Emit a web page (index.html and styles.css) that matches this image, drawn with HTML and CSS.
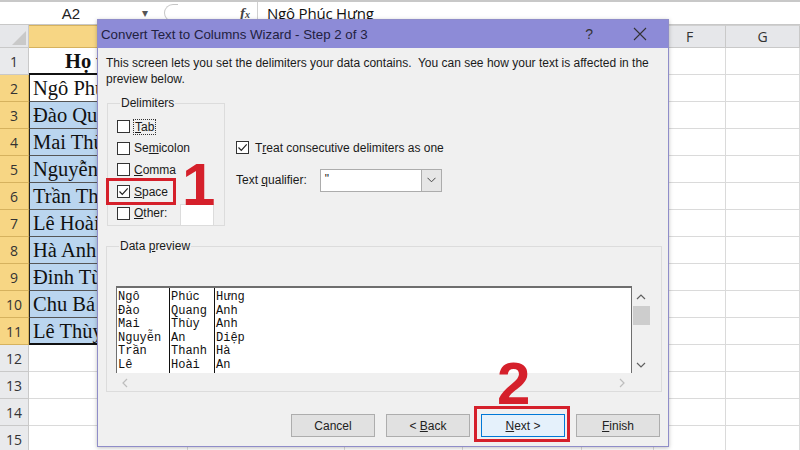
FILE: index.html
```html
<!DOCTYPE html>
<html lang="vi">
<head>
  <meta charset="UTF-8" />
  <title>Convert Text to Columns Wizard</title>
  <link rel="stylesheet" href="styles.css">
</head>
<body>
  <!-- Formula bar -->
  <div class="formula-bar">
    <div class="name-box"><span class="ref">A2</span><span class="nb-arrow">&#9662;</span></div>
    <div class="fb-handle"></div>
    <div class="fx">f<small>x</small></div>
    <div class="fb-value">Ngô Phúc Hưng</div>
  </div>

  <!-- Sheet grid -->
  <div class="sheet">
    <div class="hd corner"><svg width="14" height="14" viewBox="0 0 14 14"><polygon points="14,0 14,14 0,14" fill="#c9c9c9"/></svg></div>
    <div class="hd col sel">A</div>
    <div class="hd col">B</div>
    <div class="hd col">C</div>
    <div class="hd col">D</div>
    <div class="hd col">E</div>
    <div class="hd col">F</div>
    <div class="hd col">G</div>
  </div>

  <!-- Wizard dialog -->
  <div class="dialog">
    <div class="titlebar">
      <span class="title">Convert Text to Columns Wizard - Step 2 of 3</span>
      <span class="tb-help">?</span>
      <svg class="tb-close" width="14" height="14" viewBox="0 0 14 14"><path d="M1 1 L13 13 M13 1 L1 13" stroke="#333" stroke-width="1.1"/></svg>
    </div>
    <div class="body">
      <p class="intro">This screen lets you set the delimiters your data contains.&nbsp; You can see how your text is affected in the preview below.</p>

      <div class="options">
        <fieldset class="group delims">
          <legend>Delimiters</legend>
          <label class="cb"><span class="box"></span><span class="focus"><u>T</u>ab</span></label>
          <label class="cb"><span class="box"></span>Se<u>m</u>icolon</label>
          <label class="cb"><span class="box"></span><u>C</u>omma</label>
          <label class="cb"><span class="box checked"><svg width="11" height="11" viewBox="0 0 11 11"><path d="M1.5 5.5 L4.3 8.3 L9.7 2.4" fill="none" stroke="#222" stroke-width="1.2"/></svg></span><u>S</u>pace</label>
          <label class="cb"><span class="box"></span><u>O</u>ther:<span class="other-input"></span></label>
        </fieldset>

        <div class="right-opts">
          <label class="cb"><span class="box checked"><svg width="11" height="11" viewBox="0 0 11 11"><path d="M1.5 5.5 L4.3 8.3 L9.7 2.4" fill="none" stroke="#222" stroke-width="1.2"/></svg></span>T<u>r</u>eat consecutive delimiters as one</label>
          <div class="qualifier">
            <span>Text <u>q</u>ualifier:</span>
            <div class="select"><span class="sel-val">"</span><span class="sel-btn"><svg width="9" height="6" viewBox="0 0 9 6"><path d="M0.5 0.8 L4.5 4.8 L8.5 0.8" fill="none" stroke="#444" stroke-width="1"/></svg></span></div>
          </div>
        </div>
      </div>

      <fieldset class="group preview">
        <legend>Data <u>p</u>review</legend>
        <div class="pv-wrap">
          <div class="pv-box">
            <div class="pv-col c1">Ngô<br>Đào<br>Mai<br>Nguyễn<br>Trần<br>Lê</div>
            <div class="pv-col c2">Phúc<br>Quang<br>Thùy<br>An<br>Thanh<br>Hoài</div>
            <div class="pv-col c3">Hưng<br>Anh<br>Anh<br>Diệp<br>Hà<br>An</div>
          </div>
          <div class="vscroll">
            <svg width="10" height="6" viewBox="0 0 10 6"><path d="M1 5 L5 1 L9 5" fill="none" stroke="#606060" stroke-width="1.2"/></svg>
            <span class="thumb"></span>
            <svg class="down" width="10" height="6" viewBox="0 0 10 6"><path d="M1 1 L5 5 L9 1" fill="none" stroke="#606060" stroke-width="1.2"/></svg>
          </div>
          <div class="hscroll">
            <svg width="6" height="10" viewBox="0 0 6 10"><path d="M5 1 L1 5 L5 9" fill="none" stroke="#bdbdbd" stroke-width="1.2"/></svg>
            <svg width="6" height="10" viewBox="0 0 6 10"><path d="M1 1 L5 5 L1 9" fill="none" stroke="#bdbdbd" stroke-width="1.2"/></svg>
          </div>
        </div>
      </fieldset>

      <div class="buttons">
        <button class="btn">Cancel</button>
        <button class="btn">&lt; <u>B</u>ack</button>
        <button class="btn primary"><u>N</u>ext &gt;</button>
        <button class="btn"><u>F</u>inish</button>
      </div>
    </div>
  </div>

  <!-- Step markers -->
  <div class="mark-box mark-space"></div>
  <div class="mark-num num1">1</div>
  <div class="mark-box mark-next"></div>
  <div class="mark-num num2">2</div>

  <script>
    // build sheet rows
    var names = ['Ngô Phúc Hưng', 'Đào Quang Anh', 'Mai Thùy Anh', 'Nguyễn An Diệp', 'Trần Thanh Hà',
      'Lê Hoài An', 'Hà Anh Tuấn', 'Đinh Từ Minh', 'Chu Bá Long', 'Lê Thùy Linh'];
    var sheet = document.querySelector('.sheet');
    for (var r = 1; r <= 15; r++) {
      var hd = document.createElement('div');
      hd.className = 'hd row' + (r >= 2 && r <= 11 ? ' sel' : '');
      hd.textContent = r;
      sheet.appendChild(hd);
      var a = document.createElement('div');
      if (r === 1) {
        a.className = 'cell a head';
        a.textContent = 'Họ và tên';
      } else if (r <= 11) {
        a.className = 'cell a data' + (r === 2 ? ' active' : '') + (r === 11 ? ' last' : '');
        a.textContent = names[r - 2];
      } else {
        a.className = 'cell';
      }
      sheet.appendChild(a);
      for (var c = 0; c < 6; c++) {
        var cell = document.createElement('div');
        cell.className = 'cell';
        sheet.appendChild(cell);
      }
    }
  </script>
</body>
</html>
```

FILE: styles.css
```css
* {
  box-sizing: border-box;
}
body {
  margin: 0;
  width: 800px;
  height: 450px;
  overflow: hidden;
  background: #fff;
  font-family: "Liberation Sans", Arial, sans-serif;
  position: relative;
}

/* Formula bar */
.formula-bar {
  display: flex;
  align-items: center;
  height: 25px;
  border-top: 2px solid #c8c8c8;
  border-bottom: 1px solid #c8c8c8;
  background: #fff;
}
.name-box {
  width: 164px;
  display: flex;
  align-items: center;
  font-size: 15px;
  color: #222;
}
.name-box .ref {
  width: 142px;
  text-align: center;
}
.nb-arrow {
  font-size: 12px;
  color: #555;
}
.fb-handle {
  width: 14px;
  height: 18px;
  border: 1px solid #c6c6c6;
  border-right: none;
  border-radius: 9px 0 0 9px;
}
.fx {
  margin-left: 62px;
  width: 13px;
  font-family: "Liberation Serif", serif;
  font-style: italic;
  font-weight: bold;
  font-size: 15px;
  color: #444;
}
.fx small {
  font-size: 10px;
}
.fb-value {
  margin-left: 4px;
  border-left: 1px solid #d0d0d0;
  height: 22px;
  line-height: 22px;
  padding-left: 9px;
  font-size: 15px;
  color: #111;
  font-family: "Open Sans", sans-serif;
  letter-spacing: -0.2px;
}

/* Sheet */
.sheet {
  display: grid;
  grid-template-columns: 29px 159px 157px 118px 119px 72px 72px 74px;
  grid-template-rows: 23px repeat(15, 27px);
}
.hd {
  background: #e6e7ea;
  border-right: 1px solid #c9c9c9;
  border-bottom: 1px solid #c9c9c9;
  display: flex;
  align-items: center;
  justify-content: center;
  font-family: "Open Sans", sans-serif;
  font-size: 14px;
  color: #333;
}
.hd.corner {
  align-items: flex-end;
  justify-content: flex-end;
  padding: 0 2px 2px 0;
}
.hd.col {
  border-top: 1px solid #d0d0d0;
}
.hd.sel {
  background: #f7d684;
  border-color: #d6b25e;
}
.hd.row {
  background: #e9eaec;
}
.hd.row.sel {
  background: #f7d684;
}
.cell {
  border-right: 1px solid #dadada;
  border-bottom: 1px solid #dadada;
  overflow: hidden;
  white-space: nowrap;
}
.cell.a {
  font-family: "Liberation Serif", serif;
  font-size: 20.5px;
  line-height: 26px;
  color: #111;
  padding-left: 3px;
}
.cell.head {
  background: #fff;
  font-weight: bold;
  padding-left: 36px;
  border-bottom: 2px solid #111;
}
.cell.data {
  background: #bad5ef;
  border-left: 1px solid #222;
  border-bottom-color: #555;
}
.cell.data.active {
  background: #fff;
}
.cell.data.last {
  border-bottom: 2px solid #111;
}

/* Dialog */
.dialog {
  position: absolute;
  left: 97px;
  top: 19px;
  width: 572px;
  height: 428px;
  background: #f0f0f0;
  border: 1px solid #8f8dc9;
  box-shadow: 0 1px 4px rgba(0, 0, 0, 0.25);
  font-size: 12px;
  color: #1a1a1a;
}
.titlebar {
  height: 28px;
  background: #8d8bd7;
  display: flex;
  align-items: center;
  padding-left: 3px;
}
.title {
  flex: 1;
  font-size: 13.3px;
  color: #222140;
}
.tb-help {
  font-size: 14px;
  color: #333;
  margin-right: 40px;
}
.tb-close {
  margin-right: 21px;
}
.body {
  padding: 7px 8px 0 8px;
}
.intro {
  margin: 0;
  line-height: 16px;
  width: 552px;
}

/* Option groups */
.options {
  display: flex;
  margin-top: 9px;
}
.group {
  border: 1px solid #dcdcdc;
  margin: 0;
  padding: 0;
}
.group legend {
  padding: 0 1px;
  margin-left: 3px;
  line-height: 14px;
}
.delims {
  width: 118px;
  height: 130px;
  margin-left: 1px;
  padding: 6px 0 0 9px;
}
.cb {
  display: flex;
  align-items: center;
  height: 21.6px;
  white-space: nowrap;
}
.box {
  width: 13px;
  height: 13px;
  border: 1px solid #333;
  background: #fff;
  margin-right: 4px;
  display: flex;
  align-items: center;
  justify-content: center;
}
.focus {
  outline: 1px dotted #333;
  outline-offset: 0;
  padding: 0 1px;
}
.other-input {
  width: 34px;
  height: 22px;
  background: #fff;
  border: 1px solid #dcdcdc;
  margin-left: 13px;
  margin-top: 4px;
}
.right-opts {
  padding: 41px 0 0 11px;
}
.right-opts .cb .box {
  margin-right: 6px;
}
.qualifier {
  display: flex;
  align-items: center;
  margin-top: 10px;
}
.select {
  margin-left: 13px;
  width: 122px;
  height: 23px;
  background: #fff;
  border: 1px solid #acacac;
  display: flex;
}
.sel-val {
  flex: 1;
  padding: 2px 0 0 4px;
}
.sel-btn {
  width: 20px;
  background: #e6e6e6;
  border-left: 1px solid #acacac;
  display: flex;
  align-items: center;
  justify-content: center;
}

/* Data preview */
.preview {
  margin-top: 13px;
  width: 556px;
  height: 153px;
  padding: 0 0 0 9px;
}
.pv-wrap {
  margin-top: 33px;
  width: 534px;
  display: grid;
  grid-template-columns: 516px 18px;
  grid-template-rows: 87px 19px;
}
.pv-box {
  background: #fff;
  border-top: 2px solid #6e6e6e;
  border-left: 1px solid #6e6e6e;
  border-right: 1px solid #6e6e6e;
  display: flex;
  font-family: "Liberation Mono", monospace;
  font-size: 12px;
  line-height: 13.6px;
  color: #111;
}
.pv-col {
  padding: 3px 0 0 1px;
  border-right: 1.5px solid #111;
}
.pv-col.c1 {
  width: 53px;
}
.pv-col.c2 {
  width: 45px;
}
.pv-col.c3 {
  border-right: none;
}
.vscroll {
  display: flex;
  flex-direction: column;
  align-items: center;
  padding-top: 8px;
}
.thumb {
  width: 17px;
  height: 19px;
  background: #cdcdcd;
  margin-top: 6px;
}
.vscroll .down {
  margin-top: auto;
  margin-bottom: 5px;
}
.hscroll {
  display: flex;
  align-items: center;
  justify-content: space-between;
  padding: 0 7px 0 6px;
}

/* Buttons */
.buttons {
  display: flex;
  gap: 11px;
  justify-content: flex-end;
  margin-top: 22px;
  width: 554px;
}
.btn {
  width: 84px;
  height: 23px;
  font-family: inherit;
  font-size: 12px;
  color: #222;
  background: #e1e1e1;
  border: 1px solid #adadad;
  padding: 0;
}
.btn.primary {
  background: #e5f1fb;
  border-color: #0078d7;
}

/* Step markers */
.mark-box {
  position: absolute;
  border: 3px solid #d5202b;
}
.mark-space {
  left: 106px;
  top: 178px;
  width: 70px;
  height: 27px;
}
.mark-next {
  left: 474px;
  top: 406px;
  width: 96px;
  height: 36px;
}
.mark-num {
  position: absolute;
  font-family: "Liberation Sans", Arial, sans-serif;
  font-weight: bold;
  font-size: 60px;
  line-height: 1;
  color: #d5202b;
}
.num1 {
  left: 182px;
  top: 155px;
}
.num2 {
  left: 497px;
  top: 354px;
}
```
